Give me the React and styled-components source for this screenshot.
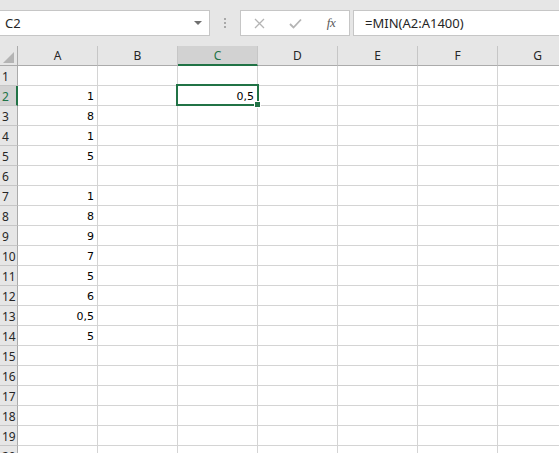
import React from "react";
import styled, { createGlobalStyle } from "styled-components";

const Global = createGlobalStyle`
  html, body { margin: 0; padding: 0; background: #ffffff; }
  body { width: 559px; height: 453px; overflow: hidden; font-family: "Noto Sans", "DejaVu Sans", sans-serif; }
`;

const Page = styled.div`
  width: 559px;
  height: 453px;
  overflow: hidden;
  display: flex;
  flex-direction: column;
`;

const TopBar = styled.div`
  height: 46px;
  flex: none;
  background: #e6e6e6;
  display: flex;
  align-items: flex-start;
  padding-top: 10px;
  box-sizing: border-box;
`;

const NameBox = styled.div`
  width: 210px;
  height: 26px;
  box-sizing: border-box;
  background: #fff;
  border: 1px solid #c6c6c6;
  border-left: none;
  display: flex;
  align-items: center;
  justify-content: space-between;
  padding: 0 6px 0 5px;
  font-size: 13px;
  color: #262626;
`;

const Caret = styled.span`
  width: 0;
  height: 0;
  border-left: 4px solid transparent;
  border-right: 4px solid transparent;
  border-top: 4px solid #6f6f6f;
  margin-right: 1px;
`;

const Dots = styled.div`
  width: 30px;
  height: 26px;
  display: flex;
  flex-direction: column;
  align-items: center;
  justify-content: center;
  gap: 2px;
  & > i {
    width: 2px;
    height: 2px;
    background: #a8a8a8;
    display: block;
  }
`;

const ButtonsBox = styled.div`
  width: 110px;
  height: 26px;
  box-sizing: border-box;
  background: #fff;
  border: 1px solid #c6c6c6;
  display: flex;
  align-items: center;
`;

const BarButton = styled.div`
  width: 36px;
  height: 24px;
  display: flex;
  align-items: center;
  justify-content: center;
  color: ${(p) => p.$color || "#b4b4b4"};
`;

const Fx = styled.span`
  font-family: "Liberation Serif", "DejaVu Serif", serif;
  font-style: italic;
  font-size: 13px;
  color: #595959;
  letter-spacing: -0.5px;
`;

const FormulaBox = styled.div`
  flex: 1;
  margin-left: 3px;
  height: 26px;
  box-sizing: border-box;
  background: #fff;
  border: 1px solid #c6c6c6;
  border-right: none;
  display: flex;
  align-items: center;
  padding-left: 11px;
  font-size: 13px;
  color: #262626;
`;

const SheetWrap = styled.div`
  position: relative;
  flex: 1;
  overflow: hidden;
`;

const Grid = styled.div`
  display: grid;
  grid-template-columns: 18px repeat(7, 80px);
  grid-auto-rows: 20px;
`;

const Corner = styled.div`
  background: #e6e6e6;
  border-right: 1px solid #ababab;
  border-bottom: 1px solid #ababab;
  box-sizing: border-box;
  position: relative;
  &::after {
    content: "";
    position: absolute;
    right: 3px;
    bottom: 2px;
    width: 0;
    height: 0;
    border-left: 11px solid transparent;
    border-bottom: 11px solid #b4b4b4;
  }
`;

const ColHead = styled.div`
  background: ${(p) => (p.$sel ? "#d2d2d2" : "#e6e6e6")};
  color: ${(p) => (p.$sel ? "#217346" : "#262626")};
  border-right: 1px solid #c6c6c6;
  border-bottom: ${(p) => (p.$sel ? "2px solid #217346" : "1px solid #ababab")};
  box-sizing: border-box;
  display: flex;
  align-items: center;
  justify-content: center;
  font-size: 12px;
  padding-top: ${(p) => (p.$sel ? "1px" : "0")};
`;

const RowHead = styled.div`
  background: ${(p) => (p.$sel ? "#d2d2d2" : "#e6e6e6")};
  color: ${(p) => (p.$sel ? "#217346" : "#262626")};
  border-right: ${(p) => (p.$sel ? "2px solid #217346" : "1px solid #ababab")};
  border-bottom: 1px solid #c6c6c6;
  box-sizing: border-box;
  display: flex;
  align-items: center;
  padding: 2px 0 0 2px;
  font-size: 12px;
`;

const Cell = styled.div`
  background: #fff;
  border-right: 1px solid #d4d4d4;
  border-bottom: 1px solid #d4d4d4;
  box-sizing: border-box;
  display: flex;
  align-items: flex-end;
  justify-content: flex-end;
  padding: 0 3px 2px 0;
  font-family: "DejaVu Sans", sans-serif;
  font-size: 11px;
  color: #000;
`;

const Selection = styled.div`
  position: absolute;
  left: 176px;
  top: 38px;
  width: 83px;
  height: 22px;
  box-sizing: border-box;
  border: 2px solid #217346;
  pointer-events: none;
`;

const Handle = styled.div`
  position: absolute;
  right: -4px;
  bottom: -4px;
  width: 5px;
  height: 5px;
  background: #217346;
  border: 1px solid #fff;
`;

const columns = ["A", "B", "C", "D", "E", "F", "G"];
const values = {
  2: { A: "1", C: "0,5" },
  3: { A: "8" },
  4: { A: "1" },
  5: { A: "5" },
  7: { A: "1" },
  8: { A: "8" },
  9: { A: "9" },
  10: { A: "7" },
  11: { A: "5" },
  12: { A: "6" },
  13: { A: "0,5" },
  14: { A: "5" },
};

export default function App() {
  const rows = Array.from({ length: 21 }, (_, i) => i + 1);
  return (
    <Page>
      <Global />
      <TopBar>
        <NameBox>
          <span>C2</span>
          <Caret />
        </NameBox>
        <Dots>
          <i />
          <i />
          <i />
        </Dots>
        <ButtonsBox>
          <BarButton>
            <svg width="11" height="11" viewBox="0 0 11 11">
              <path d="M1 1L10 10M10 1L1 10" stroke="#b4b4b4" strokeWidth="1.3" fill="none" />
            </svg>
          </BarButton>
          <BarButton>
            <svg width="13" height="11" viewBox="0 0 13 11">
              <path d="M1 6L4.5 9.5L12 1.5" stroke="#b4b4b4" strokeWidth="1.8" fill="none" />
            </svg>
          </BarButton>
          <BarButton>
            <Fx>fx</Fx>
          </BarButton>
        </ButtonsBox>
        <FormulaBox>=MIN(A2:A1400)</FormulaBox>
      </TopBar>
      <SheetWrap>
        <Grid>
          <Corner />
          {columns.map((c) => (
            <ColHead key={c} $sel={c === "C"}>
              {c}
            </ColHead>
          ))}
          {rows.map((r) => (
            <React.Fragment key={r}>
              <RowHead $sel={r === 2}>{r}</RowHead>
              {columns.map((c) => (
                <Cell key={c}>{values[r] && values[r][c]}</Cell>
              ))}
            </React.Fragment>
          ))}
        </Grid>
        <Selection>
          <Handle />
        </Selection>
      </SheetWrap>
    </Page>
  );
}
